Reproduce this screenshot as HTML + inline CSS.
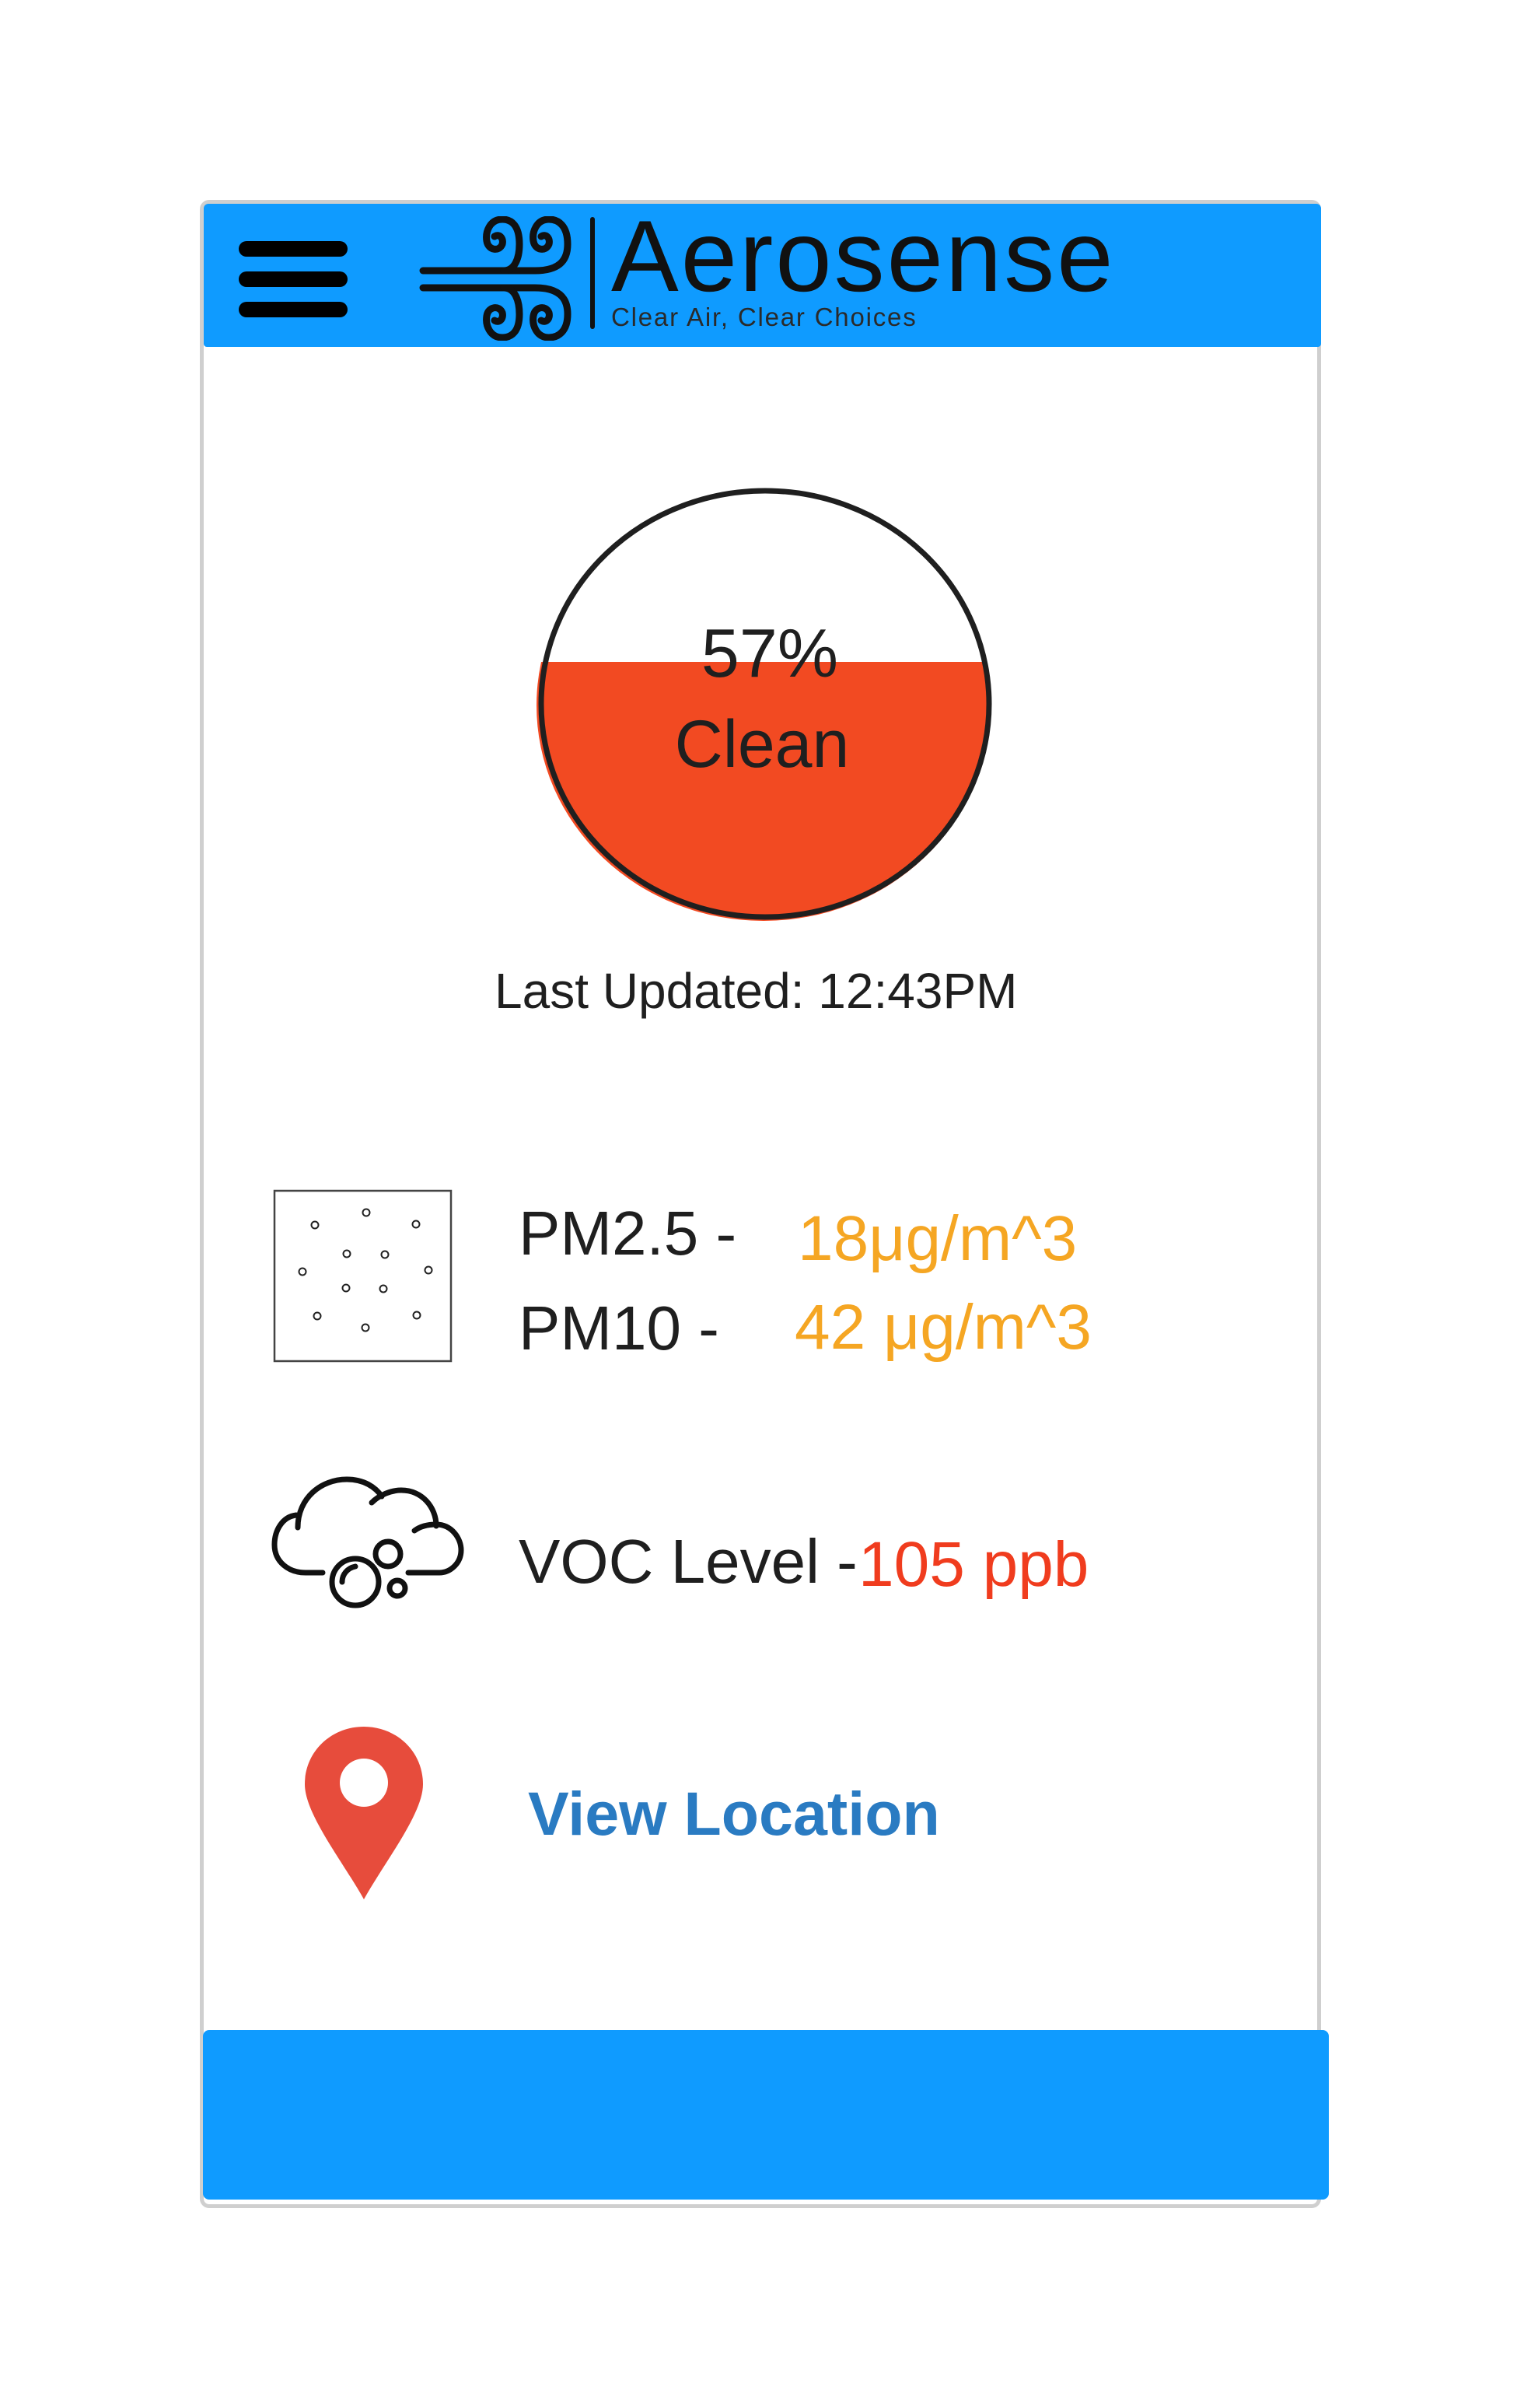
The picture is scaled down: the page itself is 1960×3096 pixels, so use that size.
<!DOCTYPE html>
<html><head><meta charset="utf-8"><style>
html,body{margin:0;padding:0;background:#fff;}
body{width:1960px;height:3096px;position:relative;overflow:hidden;font-family:"Liberation Sans",sans-serif;}
.a{position:absolute;}
.t{position:absolute;white-space:nowrap;line-height:1;}
</style></head><body>
<div class="a" style="left:257px;top:257px;width:1442px;height:2582px;border:5px solid #cfcfcf;border-radius:12px;box-sizing:border-box;"></div>
<div class="a" style="left:262px;top:262px;width:1437px;height:184px;background:#0f9bff;border-radius:6px 6px 4px 4px;"></div>
<div class="a" style="left:307px;top:310px;width:140px;height:20px;background:#000;border-radius:10px;"></div>
<div class="a" style="left:307px;top:349px;width:140px;height:20px;background:#000;border-radius:10px;"></div>
<div class="a" style="left:307px;top:388px;width:140px;height:20px;background:#000;border-radius:10px;"></div>
<svg class="a" style="left:538px;top:278px" width="240" height="160" viewBox="0 0 240 160">
<g fill="none" stroke="#111" stroke-width="9" stroke-linecap="round">
<path d="M6 70 H150 C186 70 192 52 192 36 C192 12 180 4 168 4 C152 4 146 20 148 32 C150 44 164 46 168 36 C170 28 164 22 158 26"/>
<path d="M110 70 C124 70 130 54 130 36 C130 12 120 4 108 4 C92 4 86 20 88 32 C90 44 104 46 108 36 C110 28 104 22 98 26"/>
<path d="M6 92 H150 C186 92 192 110 192 126 C192 148 180 156 168 156 C152 156 146 140 148 128 C150 116 164 114 168 124 C170 132 164 138 158 134"/>
<path d="M110 92 C124 92 130 108 130 126 C130 148 120 156 108 156 C92 156 86 140 88 128 C90 116 104 114 108 124 C110 132 104 138 98 134"/>
<path d="M224 4 V142" stroke-width="6"/>
</g></svg>
<div class="t" style="left:786px;top:264px;font-size:130px;color:#111;letter-spacing:3px;">Aerosense</div>
<div class="t" style="left:786px;top:391px;font-size:33px;color:#2a2a2a;letter-spacing:1.8px;">Clear Air, Clear Choices</div>
<svg class="a" style="left:680px;top:620px" width="620" height="620" viewBox="0 0 620 620">
<defs><clipPath id="c"><rect x="0" y="231" width="620" height="400"/></clipPath></defs>
<ellipse cx="302" cy="287" rx="292" ry="277" fill="#f24a22" clip-path="url(#c)"/>
<ellipse cx="304" cy="285" rx="288" ry="274" fill="none" stroke="#1f1f1f" stroke-width="7"/>
</svg>
<div class="t" style="left:800px;top:796px;width:380px;text-align:center;font-size:88px;color:#1f1f1f;">57%</div>
<div class="t" style="left:780px;top:914px;width:400px;text-align:center;font-size:86px;color:#1f1f1f;">Clean</div>
<div class="t" style="left:636px;top:1242px;font-size:64px;color:#1f1f1f;">Last Updated: 12:43PM</div>
<svg class="a" style="left:350px;top:1528px" width="240" height="230" viewBox="0 0 240 230">
<rect x="3" y="3" width="227" height="219" fill="#fff" stroke="#444" stroke-width="2.5"/>
<g fill="none" stroke="#222" stroke-width="2">
<circle cx="121" cy="31" r="4.5"/><circle cx="55" cy="47" r="4.5"/><circle cx="185" cy="46" r="4.5"/>
<circle cx="96" cy="84" r="4.5"/><circle cx="145" cy="85" r="4.5"/><circle cx="39" cy="107" r="4.5"/><circle cx="201" cy="105" r="4.5"/>
<circle cx="95" cy="128" r="4.5"/><circle cx="143" cy="129" r="4.5"/><circle cx="58" cy="164" r="4.5"/><circle cx="186" cy="163" r="4.5"/><circle cx="120" cy="179" r="4.5"/>
</g></svg>
<div class="t" style="left:667px;top:1546px;font-size:80px;color:#1f1f1f;">PM2.5 -</div>
<div class="t" style="left:1026px;top:1552px;font-size:82px;color:#f5a623;">18μg/m^3</div>
<div class="t" style="left:667px;top:1668px;font-size:80px;color:#1f1f1f;">PM10 -</div>
<div class="t" style="left:1022px;top:1666px;font-size:82px;color:#f5a623;">42 μg/m^3</div>
<svg class="a" style="left:343px;top:1886px" width="260" height="220" viewBox="0 0 260 220">
<g fill="none" stroke="#111" stroke-width="7" stroke-linecap="round">
<path d="M40 78 C40 40 70 16 103 16 C125 16 140 26 148 38"/>
<path d="M135 46 C145 36 160 30 173 30 C200 30 218 52 218 76"/>
<path d="M190 82 C198 76 208 74 218 74 C238 74 250 92 250 107 C250 124 236 136 222 136 H182"/>
<path d="M38 62 C20 64 10 82 10 100 C10 122 28 136 50 136 H72"/>
<circle cx="156" cy="112" r="16"/>
<circle cx="114" cy="148" r="30"/>
<path d="M97 148 C97 138 104 130 114 128"/>
<circle cx="168" cy="156" r="10"/>
</g></svg>
<div class="t" style="left:667px;top:1968px;font-size:80px;color:#1f1f1f;">VOC Level -</div>
<div class="t" style="left:1104px;top:1971px;font-size:82px;color:#f03c1e;">105 ppb</div>
<svg class="a" style="left:388px;top:2216px" width="160" height="230" viewBox="0 0 160 230">
<path d="M80 4 C38 4 4 36 4 78 C4 116 52 176 80 226 C108 176 156 116 156 78 C156 36 122 4 80 4 Z" fill="#e74c3c"/>
<circle cx="80" cy="76" r="31" fill="#fff"/>
</svg>
<div class="t" style="left:679px;top:2292px;font-size:79px;font-weight:bold;color:#2a7bc2;">View Location</div>
<div class="a" style="left:261px;top:2610px;width:1448px;height:218px;background:#0f9bff;border-radius:8px;"></div>
</body></html>
